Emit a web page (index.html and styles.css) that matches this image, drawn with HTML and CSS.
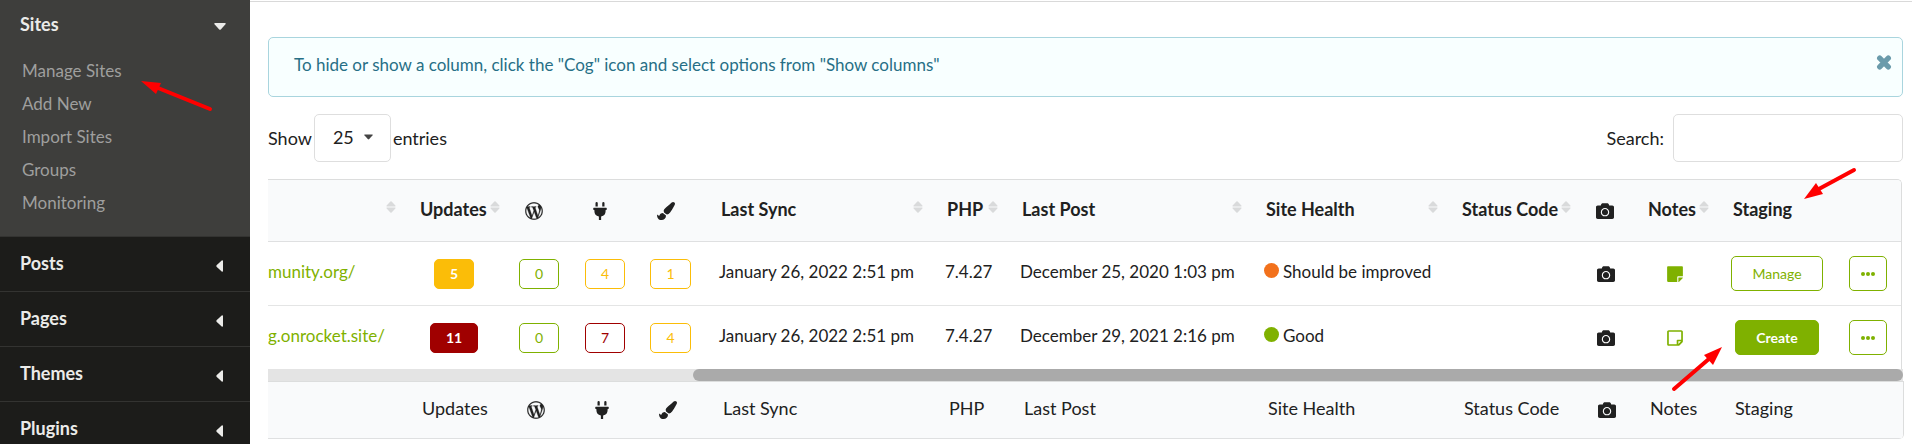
FILE: index.html
```html
<!DOCTYPE html>
<html lang="en">
<head>
<meta charset="utf-8">
<title>Manage Sites</title>
<link rel="stylesheet" href="styles.css">
</head>
<body>
<svg class="defs" aria-hidden="true">
  <symbol id="wordpress" viewBox="0 0 512 512"><path d="M256 8C119.3 8 8 119.2 8 256c0 136.7 111.3 248 248 248s248-111.3 248-248C504 119.2 392.7 8 256 8zM33 256c0-32.3 6.9-63 19.3-90.7l106.4 291.4C84.3 420.5 33 344.2 33 256zm223 223c-21.9 0-43-3.2-63-9.1l66.9-194.4 68.5 187.8c.5 1.1 1 2.1 1.6 3.1-23.1 8.1-48 12.6-74 12.6zm30.7-327.5c13.4-.7 25.5-2.1 25.5-2.1 12-1.4 10.6-19.1-1.4-18.4 0 0-36.1 2.8-59.4 2.8-21.9 0-58.7-2.8-58.7-2.8-12-.7-13.4 17.7-1.4 18.4 0 0 11.4 1.4 23.4 2.1l34.7 95.2L200.6 393l-81.2-241.5c13.4-.7 25.5-2.1 25.5-2.1 12-1.4 10.6-19.1-1.4-18.4 0 0-36.1 2.8-59.4 2.8-4.2 0-9.1-.1-14.4-.3C109.6 73 178.1 33 256 33c58 0 110.9 22.2 150.6 58.5-1-.1-1.9-.2-2.9-.2-21.9 0-37.4 19.1-37.4 39.6 0 18.4 10.6 33.9 21.9 52.3 8.5 14.8 18.4 33.9 18.4 61.5 0 19.1-7.3 41.2-17 72.1l-22.2 74.3-80.7-239.6zm81.4 297.2l68.1-196.9c12.7-31.8 17-57.2 17-79.9 0-8.2-.5-15.8-1.5-22.9 17.4 31.8 27.3 68.2 27.3 107 0 82.3-44.6 154.1-110.9 192.7z" stroke="currentColor" stroke-width="8"/></symbol>
  <symbol id="plug" viewBox="0 0 384 512"><path d="M320 32a32 32 0 0 0-64 0v96h64zm48 128H16A16 16 0 0 0 0 176v32a16 16 0 0 0 16 16h16v32a160.07 160.07 0 0 0 128 156.8V512h64v-99.2A160.07 160.07 0 0 0 352 256v-32h16a16 16 0 0 0 16-16v-32a16 16 0 0 0-16-16zM128 32a32 32 0 0 0-64 0v96h64z"/></symbol>
  <symbol id="brush" viewBox="0 0 512 512"><path d="M167.02 309.34c-40.12 2.58-76.53 17.86-97.19 72.3-2.35 6.21-8 9.98-14.59 9.98-11.11 0-45.46-27.67-55.25-34.35C0 439.62 37.93 512 128 512c75.86 0 128-43.77 128-120.19 0-3.11-.65-6.08-.97-9.13l-88.01-73.34zM457.89 0c-15.16 0-29.37 6.71-40.21 16.45C213.27 199.05 192 203.34 192 257.09c0 13.7 3.25 26.76 8.73 38.7l63.82 53.18c7.21 1.8 14.64 3.03 22.39 3.03 62.11 0 98.11-45.47 211.16-256.46 7.38-14.35 13.9-29.85 13.9-45.99C512 20.64 486 0 457.89 0z"/></symbol>
  <symbol id="camera" viewBox="0 0 512 512"><path d="M512 144v288c0 26.5-21.5 48-48 48H48c-26.5 0-48-21.5-48-48V144c0-26.5 21.5-48 48-48h88l12.3-32.9c7-18.7 24.9-31.1 44.9-31.1h125.5c20 0 37.9 12.4 44.9 31.1L376 96h88c26.5 0 48 21.5 48 48zM376 288c0-66.2-53.8-120-120-120s-120 53.8-120 120 53.8 120 120 120 120-53.8 120-120zm-32 0c0 48.5-39.5 88-88 88s-88-39.5-88-88 39.5-88 88-88 88 39.5 88 88z"/></symbol>
  <symbol id="note" viewBox="0 0 448 512"><path d="M312 320h136V56c0-13.3-10.7-24-24-24H24C10.7 32 0 42.7 0 56v400c0 13.3 10.7 24 24 24h264V344c0-13.2 10.8-24 24-24zm129 55l-98 98c-4.5 4.5-10.6 7-17 7h-6V352h128v6.1c0 6.3-2.5 12.4-7 16.9z"/></symbol>
  <symbol id="note-outline" viewBox="0 0 448 512"><path d="M448 348.106V80c0-26.51-21.49-48-48-48H48C21.49 32 0 53.49 0 80v351.988c0 26.51 21.49 48 48 48h268.118a48 48 0 0 0 33.941-14.059l83.882-83.882A48 48 0 0 0 448 348.106zm-128 80.005v-76.118h76.118L320 428.111zM400 80v223.989H296c-13.255 0-24 10.745-24 24v104H48V80h352z"/></symbol>
  <symbol id="dots" viewBox="0 0 14 4"><circle cx="2" cy="2" r="2"/><circle cx="7" cy="2" r="2"/><circle cx="12" cy="2" r="2"/></symbol>
  <symbol id="sort" viewBox="0 0 10 12"><path d="M1 5.4Q0 5.4.6 4.5L4.4.5Q5 0 5.6.5L9.4 4.5Q10 5.4 9 5.4zM1 6.6Q0 6.6.6 7.5L4.4 11.5Q5 12 5.6 11.5L9.4 7.5Q10 6.6 9 6.6z"/></symbol>
  <symbol id="caret-down" viewBox="0 0 12 7"><path d="M1 0h10q1.2.3.5 1.3L7 6.2q-1 1-2 0L.5 1.3Q-.2.3 1 0z"/></symbol>
  <symbol id="caret-left" viewBox="0 0 7 12"><path d="M7 1v10q-.3 1.2-1.3.5L.8 7q-1-1 0-2L5.7.5Q6.7-.2 7 1z"/></symbol>
  <symbol id="close" viewBox="0 0 14 14"><path d="M3 3l8 8M11 3l-8 8" stroke="currentColor" stroke-width="5" stroke-linecap="round"/></symbol>
</svg>

<div class="app">
  <nav class="sidebar">
    <section class="group">
      <button class="toggle open">Sites <svg class="caret-down"><use href="#caret-down"/></svg></button>
      <ul class="submenu">
        <li><a href="#">Manage Sites</a></li>
        <li><a href="#">Add New</a></li>
        <li><a href="#">Import Sites</a></li>
        <li><a href="#">Groups</a></li>
        <li><a href="#">Monitoring</a></li>
      </ul>
    </section>
    <button class="toggle">Posts <svg class="caret-left"><use href="#caret-left"/></svg></button>
    <button class="toggle">Pages <svg class="caret-left"><use href="#caret-left"/></svg></button>
    <button class="toggle">Themes <svg class="caret-left"><use href="#caret-left"/></svg></button>
    <button class="toggle">Plugins <svg class="caret-left"><use href="#caret-left"/></svg></button>
  </nav>

  <main class="content">
    <div class="message">
      <p>To hide or show a column, click the "Cog" icon and select options from "Show columns"</p>
      <button class="close" aria-label="Dismiss"><svg><use href="#close"/></svg></button>
    </div>

    <div class="controls">
      <label class="length">Show
        <span class="select"><select><option>25</option><option>50</option><option>100</option></select><svg class="select-caret"><use href="#caret-down"/></svg></span>
        entries</label>
      <label class="search">Search: <input type="search"></label>
    </div>

    <table class="sites">
      <colgroup><col class="c-url"><col class="c-updates"><col class="c-icon"><col class="c-icon"><col class="c-brush"><col class="c-sync"><col class="c-php"><col class="c-post"><col class="c-health"><col class="c-status"><col class="c-camera"><col class="c-notes"><col class="c-staging"><col class="c-actions"></colgroup>
      <thead>
        <tr>
          <th><div class="head end"><svg class="sort"><use href="#sort"/></svg></div></th>
          <th><div class="head">Updates<svg class="sort"><use href="#sort"/></svg></div></th>
          <th class="pic"><svg class="icon"><use href="#wordpress"/></svg></th>
          <th class="pic"><svg class="icon"><use href="#plug"/></svg></th>
          <th class="pic"><svg class="icon"><use href="#brush"/></svg></th>
          <th><div class="head">Last Sync<svg class="sort"><use href="#sort"/></svg></div></th>
          <th><div class="head">PHP<svg class="sort"><use href="#sort"/></svg></div></th>
          <th><div class="head">Last Post<svg class="sort"><use href="#sort"/></svg></div></th>
          <th><div class="head">Site Health<svg class="sort"><use href="#sort"/></svg></div></th>
          <th><div class="head">Status Code<svg class="sort"><use href="#sort"/></svg></div></th>
          <th class="pic"><svg class="icon"><use href="#camera"/></svg></th>
          <th><div class="head">Notes<svg class="sort"><use href="#sort"/></svg></div></th>
          <th>Staging</th>
          <th></th>
        </tr>
      </thead>
      <tbody>
        <tr>
          <td class="url"><a href="#">munity.org/</a></td>
          <td class="center"><a href="#" class="label solid yellow">5</a></td>
          <td class="center"><a href="#" class="label green">0</a></td>
          <td class="center"><a href="#" class="label yellow">4</a></td>
          <td class="center"><a href="#" class="label yellow">1</a></td>
          <td>January 26, 2022 2:51 pm</td>
          <td>7.4.27</td>
          <td>December 25, 2020 1:03 pm</td>
          <td><span class="health"><i class="dot warn"></i>Should be improved</span></td>
          <td></td>
          <td class="center"><svg class="icon"><use href="#camera"/></svg></td>
          <td class="center"><svg class="icon note"><use href="#note"/></svg></td>
          <td class="center staging"><button class="button">Manage</button></td>
          <td class="actions"><button class="button more" aria-label="Actions"><svg><use href="#dots"/></svg></button></td>
        </tr>
        <tr>
          <td class="url"><a href="#">g.onrocket.site/</a></td>
          <td class="center"><a href="#" class="label solid red">11</a></td>
          <td class="center"><a href="#" class="label green">0</a></td>
          <td class="center"><a href="#" class="label red">7</a></td>
          <td class="center"><a href="#" class="label yellow">4</a></td>
          <td>January 26, 2022 2:51 pm</td>
          <td>7.4.27</td>
          <td>December 29, 2021 2:16 pm</td>
          <td><span class="health"><i class="dot good"></i>Good</span></td>
          <td></td>
          <td class="center"><svg class="icon"><use href="#camera"/></svg></td>
          <td class="center"><svg class="icon note"><use href="#note-outline"/></svg></td>
          <td class="center staging"><button class="button primary">Create</button></td>
          <td class="actions"><button class="button more" aria-label="Actions"><svg><use href="#dots"/></svg></button></td>
        </tr>
      </tbody>
    </table>

    <div class="track"><div class="thumb"></div></div>

    <table class="sites footer">
      <colgroup><col class="c-url"><col class="c-updates"><col class="c-icon"><col class="c-icon"><col class="c-brush"><col class="c-sync"><col class="c-php"><col class="c-post"><col class="c-health"><col class="c-status"><col class="c-camera"><col class="c-notes"><col class="c-staging"><col class="c-actions"></colgroup>
      <tfoot>
        <tr>
          <th></th>
          <th>Updates</th>
          <th class="pic"><svg class="icon"><use href="#wordpress"/></svg></th>
          <th class="pic"><svg class="icon"><use href="#plug"/></svg></th>
          <th class="pic"><svg class="icon"><use href="#brush"/></svg></th>
          <th>Last Sync</th>
          <th>PHP</th>
          <th>Last Post</th>
          <th>Site Health</th>
          <th>Status Code</th>
          <th class="pic"><svg class="icon"><use href="#camera"/></svg></th>
          <th>Notes</th>
          <th>Staging</th>
          <th></th>
        </tr>
      </tfoot>
    </table>
  </main>

  <svg class="arrow arrow-menu" viewBox="0 0 74 34"><path class="shaft" d="M18 9L70 30"/><path d="M1 2L21 4 16 15z"/></svg>
  <svg class="arrow arrow-staging" viewBox="0 0 54 34"><path class="shaft" d="M14 23L51 3"/><path d="M1 32L13 16 20 27z"/></svg>
  <svg class="arrow arrow-create" viewBox="0 0 54 46"><path class="shaft" d="M3 43L39 12"/><path d="M51 1L33 9 42 19z"/></svg>
</div>
</body>
</html>
```

FILE: styles.css
```css
* { box-sizing: border-box; }

body {
  margin: 0;
  background: #fff;
  color: #212121;
  font-family: Lato, "Open Sans", sans-serif;
  font-size: 18px;
  line-height: 24px;
}

svg { fill: currentColor; display: block; }
a { text-decoration: none; }
button, select, input { font: inherit; color: inherit; }
.defs { display: none; }

.app {
  position: relative;
  display: flex;
  height: 100vh;
  overflow: hidden;
}

/* Sidebar */
.sidebar {
  flex: 0 0 250px;
  background: #1c1c1a;
  overflow: hidden;
}
.group { background: #3e3e3c; padding-bottom: 17px; }
.toggle {
  display: flex;
  align-items: center;
  justify-content: space-between;
  width: 100%;
  height: 55px;
  padding: 0 27px 2px 20px;
  border: 0;
  border-top: 1px solid #333331;
  background: none;
  color: #ebebe9;
  font-weight: 700;
  text-align: left;
}
.toggle.open { height: 50px; border-top: 0; padding-right: 24px; }
.caret-down { width: 12px; height: 7px; margin-top: 5px; }
.caret-left { width: 7px; height: 12px; margin-top: 6px; }
.submenu {
  list-style: none;
  margin: 0;
  padding: 4px 0 0 22px;
  font-size: 17px;
}
.submenu a {
  display: block;
  color: #9f9f9e;
  line-height: 33px;
}

/* Content */
.content {
  flex: 1;
  min-width: 0;
  margin-top: 1px;
  padding: 35px 9px 0 18px;
  border-top: 1px solid #d9d9d9;
}
.message {
  display: flex;
  justify-content: space-between;
  align-items: flex-start;
  padding: 15px 10px 19px 25px;
  border: 1px solid #a9d5de;
  border-radius: 5px;
  background: #f8ffff;
  color: #276f86;
}
.message p { margin: 0; font-size: 17px; }
.close {
  padding: 2px 0 0;
  border: 0;
  background: none;
  color: #6a9bab;
}
.close svg { width: 16px; height: 15px; }

.controls {
  display: flex;
  justify-content: space-between;
  align-items: center;
  margin: 17px 0;
}
.controls label { display: flex; align-items: center; }
.length { gap: 2px; }
.search { gap: 9px; }
.select { position: relative; }
.select select {
  display: block;
  appearance: none;
  width: 77px;
  height: 48px;
  padding: 0 18px 2px;
  border: 1px solid #dedede;
  border-radius: 5px;
  background: #fff;
}
.select-caret {
  position: absolute;
  right: 18px;
  top: 20px;
  width: 9px;
  height: 6px;
  color: #444;
  pointer-events: none;
}
.search input {
  width: 230px;
  height: 48px;
  padding: 0 16px;
  border: 1px solid #dedede;
  border-radius: 5px;
  background: #fff;
}

/* Table */
.sites {
  width: calc(100% - 1px);
  table-layout: fixed;
  border-collapse: separate;
  border-spacing: 0;
  border: solid #dcdddd;
  border-width: 1px 1px 0 0;
  border-radius: 0 5px 0 0;
  overflow: hidden;
}
.c-url { width: 136px; }
.c-updates { width: 104px; }
.c-icon { width: 66px; }
.c-brush { width: 65px; }
.c-sync { width: 226px; }
.c-php { width: 75px; }
.c-post { width: 244px; }
.c-health { width: 196px; }
.c-status { width: 133px; }
.c-camera { width: 53px; }
.c-notes { width: 85px; }
.c-staging { width: 118px; }
.c-actions { width: 66px; }

.sites th, .sites td {
  padding: 0 0 4px 14px;
  text-align: left;
  white-space: nowrap;
}
.sites th {
  height: 62px;
  padding-left: 16px;
  background: #f9fafb;
  border-bottom: 1px solid #dfe0e1;
  font-weight: 700;
}
.sites th.pic { padding: 0 0 0 17px; }
.sites td { height: 63px; font-size: 17px; }
.sites tbody tr:first-child td { height: 64px; border-bottom: 1px solid #e4e5e5; }
.sites td.center { padding: 0; text-align: center; }
.sites td.staging { padding-left: 2px; }
.sites td.actions { padding-bottom: 0; }
.sites td.url { padding-left: 0; }
.url a { color: #7fb100; }

.head {
  display: flex;
  align-items: center;
  justify-content: space-between;
  padding-right: 8px;
}
.head.end { justify-content: flex-end; }
.sort { width: 10px; height: 12px; color: #d9dadb; margin-bottom: 4px; }

.icon { width: 18px; height: 18px; }
.center .icon { margin: 0 auto; }
.center .note { color: #7fb100; }

.label {
  display: inline-block;
  min-width: 39px;
  margin-right: 4px;
  padding: 0 15px;
  border: 1px solid;
  border-radius: 5px;
  font-size: 14px;
  line-height: 28px;
  vertical-align: middle;
}
.label.green { color: #7fb100; }
.label.yellow { color: #fbbd08; }
.label.red { color: #a00000; }
.label.solid { color: #fff; font-weight: 700; }
.solid.yellow { background: #fbbd08; border-color: #fbbd08; }
.solid.red { background: #a00000; border-color: #a00000; }

.health { display: flex; align-items: center; gap: 4px; }
.dot { width: 15px; height: 15px; border-radius: 50%; margin-bottom: 2px; }
.warn { background: #f2711c; }
.good { background: #7fb100; }

.button {
  height: 35px;
  padding: 0 20px;
  border: 1px solid #7fb100;
  border-radius: 5px;
  background: #fff;
  color: #7fb100;
  font-size: 14px;
  vertical-align: middle;
}
.button.primary { background: #7fb100; color: #fff; font-weight: 700; }
.button.more { padding: 0 11px; }
.more svg { width: 14px; height: 4px; }

.track { height: 12px; background: #e4e4e4; }
.thumb {
  width: 74%;
  height: 12px;
  margin-left: auto;
  border-radius: 6px;
  background: #aaa;
}

.footer { width: 100%; border-radius: 0 0 5px 0; }
.footer .c-url { width: 138px; }
.footer th { height: 57px; font-weight: 400; }

/* Pointers over the page */
.arrow { position: absolute; color: #f00; }
.shaft { stroke: currentColor; stroke-width: 4; stroke-linecap: round; }
.arrow-menu { left: 140px; top: 79px; width: 74px; height: 34px; }
.arrow-staging { right: 55px; top: 167px; width: 54px; height: 34px; }
.arrow-create { right: 187px; top: 346px; width: 54px; height: 46px; }
```
